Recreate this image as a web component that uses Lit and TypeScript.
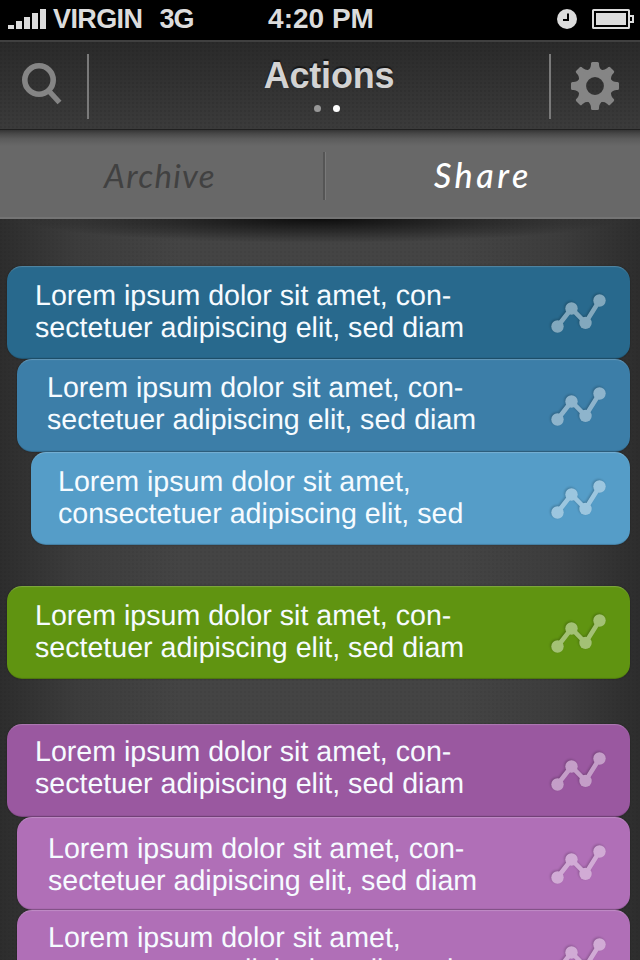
import { css, html, LitElement, svg } from "lit";
import { customElement, property } from "lit/decorators.js";
import { classMap } from "lit/directives/class-map.js";
import { styleMap } from "lit/directives/style-map.js";

interface Action {
  tone: string;
  indent: number;
  // text inset from the card's own corner
  x: number;
  y: number;
  lines: string[];
}

const hyphenated = ['Lorem ipsum dolor sit amet, con-', 'sectetuer adipiscing elit, sed diam'];
const plain = ['Lorem ipsum dolor sit amet,', 'consectetuer adipiscing elit, sed'];

const groups: { name: string, items: Action[] }[] = [
  {
    name: 'blue',
    items: [
      { tone: 'blue-dark', indent: 0, x: 28, y: 14, lines: hyphenated },
      { tone: 'blue-mid', indent: 10, x: 30, y: 13, lines: hyphenated },
      { tone: 'blue-light', indent: 24, x: 27, y: 14, lines: plain }
    ]
  },
  {
    name: 'green',
    items: [
      { tone: 'green', indent: 0, x: 28, y: 14, lines: hyphenated }
    ]
  },
  {
    name: 'purple',
    items: [
      { tone: 'purple-dark', indent: 0, x: 28, y: 12, lines: hyphenated },
      { tone: 'purple-light', indent: 10, x: 31, y: 16, lines: hyphenated },
      { tone: 'purple-light', indent: 10, x: 31, y: 12, lines: plain }
    ]
  }
];

@customElement('status-bar')
export class StatusBar extends LitElement {
  static styles = css`
    :host {
      display: grid;
      grid-template-columns: 1fr auto 1fr;
      align-items: center;
      height: 40px;
      padding: 0 6px 2px 8px;
      box-sizing: border-box;
      background: #000;
      color: #dcdcdc;
      font: bold 27px/38px "Liberation Sans", Arial, sans-serif;
    }

    .left, .right {
      display: flex;
      align-items: center;
    }

    .carrier {
      margin-left: 7px;
      letter-spacing: -.6px;
    }

    .network {
      margin-left: 17px;
      letter-spacing: -1px;
    }

    .time {
      font-size: 28px;
      letter-spacing: 0;
    }

    .right {
      justify-content: flex-end;
      gap: 15px;
    }

    svg {
      display: block;
      fill: currentColor;
    }
  `;

  protected render() {
    return html`
      <div class="left">
        <svg width="38" height="20" viewBox="0 0 38 20">
          ${[4, 8, 12, 16, 20].map((h, i) => svg`<rect x=${i * 8} y=${20 - h} width="6" height=${h} />`)}
        </svg>
        <span class="carrier">VIRGIN</span>
        <span class="network">3G</span>
      </div>
      <span class="time">4:20 PM</span>
      <div class="right">
        <svg width="20" height="20" viewBox="0 0 20 20">
          <circle cx="10" cy="10" r="10" />
          <path d="M11 4.5V11H6" fill="none" stroke="#000" stroke-width="2" />
        </svg>
        <svg width="42" height="20" viewBox="0 0 42 20">
          <rect x="1" y="1" width="36" height="18" rx=".6" fill="none" stroke="currentColor" stroke-width="2" />
          <rect x="4" y="4" width="30" height="12" />
          <path d="M38 6h4v8h-4v-2h2V8h-2z" />
        </svg>
      </div>
    `;
  }
}

@customElement('nav-header')
export class NavHeader extends LitElement {
  static styles = css`
    :host {
      display: flex;
      height: 90px;
      box-sizing: border-box;
      border-top: 2px solid #404040;
      border-bottom: 1px solid #202020;
      background:
        radial-gradient(circle at 1px 1px, rgba(0, 0, 0, .07) .8px, transparent 1.2px) 0 0 / 4px 4px,
        linear-gradient(#2a2a2a, #3b3b3b);
    }

    .side {
      display: flex;
      width: 87px;
      padding-top: 12px;
    }

    .side.right {
      width: 89px;
    }

    .rule {
      width: 2px;
      height: 65px;
      margin-top: 12px;
      background: #7a7a7a;
    }

    .middle {
      flex: 1;
      display: flex;
      flex-direction: column;
      align-items: center;
      padding: 13px 0 0 20px;
      box-sizing: border-box;
    }

    h1 {
      margin: 0;
      font: bold 36px/42px "Liberation Sans", Arial, sans-serif;
      letter-spacing: -.2px;
      color: #d3d3d3;
      text-shadow: 0 -2px 1px rgba(0, 0, 0, .5);
    }

    .dots {
      display: flex;
      gap: 12px;
      margin: 8px 5px 0 0;
    }

    .dot {
      width: 7px;
      height: 7px;
      border-radius: 50%;
      background: #989898;
    }

    .dot.current {
      background: #fff;
    }
  `;

  protected render() {
    return html`
      <div class="side">
        <svg width="87" height="66" viewBox="0 0 87 66">
          <circle cx="39" cy="26" r="14.2" fill="none" stroke="#858585" stroke-width="5.6" />
          <path d="M48.5 36.5L59.5 48.5" stroke="#858585" stroke-width="5.4" />
        </svg>
      </div>
      <div class="rule"></div>
      <div class="middle">
        <h1>Actions</h1>
        <div class="dots">
          <div class="dot"></div>
          <div class="dot current"></div>
        </div>
      </div>
      <div class="rule"></div>
      <div class="side right">
        <svg width="89" height="66" viewBox="0 0 89 66">
          <g transform="translate(44 32)">
            <g fill="#858585">
              ${[0, 45, 90, 135, 180, 225, 270, 315].map(a => svg`
                <path transform="rotate(${a})" d="M-7.5-15Q-4-18-4-21.5V-22.5Q-4-24-2.5-24H2.5Q4-24 4-22.5V-21.5Q4-18 7.5-15z" />
              `)}
            </g>
            <circle r="13.2" fill="none" stroke="#858585" stroke-width="8.6" />
          </g>
        </svg>
      </div>
    `;
  }
}

@customElement('tab-strip')
export class TabStrip extends LitElement {
  @property() selected: string = 'Share';

  static styles = css`
    :host {
      display: flex;
      align-items: center;
      height: 89px;
      padding-left: 3px;
      box-sizing: border-box;
      border-bottom: 2px solid #747474;
      background: linear-gradient(#353535, #4a4a4a 4px, #5c5c5c 9px, #686868 16px);
    }

    .tab {
      flex: 1 1 0;
      text-align: center;
      font: italic 33px/40px Lato, "Open Sans", sans-serif;
      color: #414141;
      letter-spacing: 1.3px;
      padding-top: 3px;
      padding-right: 6px;
      box-sizing: border-box;
    }

    .tab.selected {
      color: #fff;
      font-size: 34px;
      font-weight: 500;
      letter-spacing: 3.6px;
      padding-right: 0;
    }

    .split {
      width: 2px;
      height: 48px;
      background: #555;
      border-right: 1px solid #797979;
      margin-top: 4px;
    }
  `;

  private tab(name: string) {
    const classes = { tab: true, selected: name === this.selected };
    return html`<div class=${classMap(classes)}>${name}</div>`;
  }

  protected render() {
    return html`
      ${this.tab('Archive')}
      <div class="split"></div>
      ${this.tab('Share')}
    `;
  }
}

@customElement('action-card')
export class ActionCard extends LitElement {
  @property({
    attribute: false
  }) action!: Action;

  static styles = css`
    :host {
      display: block;
    }

    .card {
      display: flex;
      justify-content: space-between;
      height: 93px;
      padding-right: 23px;
      box-sizing: border-box;
      border-radius: 15px;
      box-shadow:
        inset 0 2px 1px -1px rgba(255, 255, 255, .2),
        inset 0 -2px 1px -1px rgba(0, 0, 0, .2),
        0 0 2px rgba(0, 0, 0, .35);
    }

    .blue-dark { background: #28698d; }
    .blue-mid { background: #3c7ea8; }
    .blue-light { background: #559dc8; }
    .green { background: #609411; }
    .purple-dark { background: #9a58a0; }
    .purple-light { background: #b06fb7; }

    .text {
      font: 28.6px/32px "Liberation Sans", Arial, sans-serif;
      letter-spacing: 0;
      color: #f6fbff;
      white-space: nowrap;
      text-rendering: geometricPrecision;
    }

    .line {
      display: block;
    }

    svg {
      display: block;
      opacity: .42;
      filter: drop-shadow(-1px -1px 1px rgba(0, 0, 0, .5));
    }
  `;

  protected render() {
    const { tone, indent, x, y, lines } = this.action;
    return html`
      <div class="card ${tone}" style=${styleMap({ marginLeft: `${indent}px`, paddingLeft: `${x}px`, paddingTop: `${y}px` })}>
        <div class="text">${lines.map(line => html`<span class="line">${line}</span>`)}</div>
        <svg style=${styleMap({ marginTop: `${27 - y}px` })} width="56" height="42" viewBox="0 0 56 42">
          <path d="M6.5 33.5L20.5 15.5L34.5 29.9L48.5 7.5" fill="none" stroke="#fff" stroke-width="4.6" />
          <g fill="#fff">
            <circle cx="6.5" cy="33.5" r="6.2" />
            <circle cx="20.5" cy="15.5" r="6.2" />
            <circle cx="34.5" cy="29.9" r="6.2" />
            <circle cx="48.5" cy="7.5" r="6.2" />
          </g>
        </svg>
      </div>
    `;
  }
}

@customElement('app-root')
export class AppRoot extends LitElement {
  static styles = css`
    :host {
      display: flex;
      flex-direction: column;
      width: 640px;
      height: 960px;
      overflow: hidden;
      background: #333;
    }

    status-bar, nav-header, tab-strip {
      flex: none;
    }

    .list {
      flex: 1;
      min-height: 0;
      overflow: hidden;
      padding: 47px 10px 0 7px;
      background:
        radial-gradient(ellipse 300px 24px at 50% 0, rgba(0, 0, 0, .8), rgba(0, 0, 0, .4) 50%, transparent) no-repeat,
        radial-gradient(circle at 1px 1px, rgba(0, 0, 0, .04) .8px, transparent 1.2px) 0 0 / 4px 4px,
        linear-gradient(90deg, #2d2d2d, #3c3c3c 12%, #444 28%, #444 72%, #3c3c3c 88%, #2d2d2d);
    }

    .group.blue {
      margin-bottom: 41px;
    }

    .group.green {
      margin-bottom: 45px;
    }
  `;

  protected render() {
    return html`
      <status-bar></status-bar>
      <nav-header></nav-header>
      <tab-strip></tab-strip>
      <div class="list">
        ${groups.map(group => html`
          <div class="group ${group.name}">
            ${group.items.map(action => html`<action-card .action=${action}></action-card>`)}
          </div>
        `)}
      </div>
    `;
  }
}
